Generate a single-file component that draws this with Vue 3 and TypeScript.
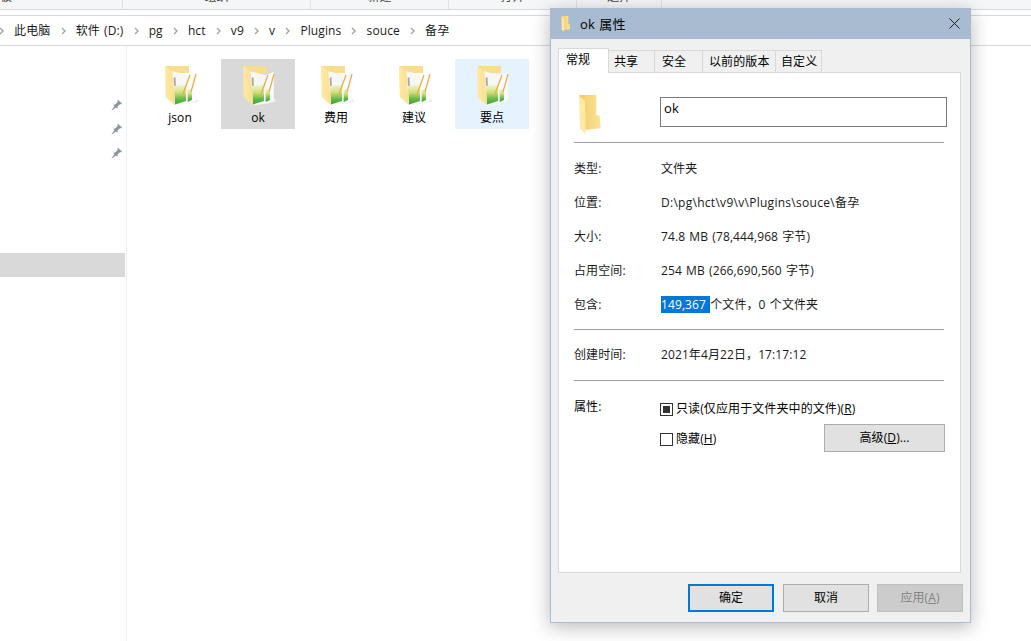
<script setup lang="ts">
interface RibbonGroup {
  label: string
  width: number
}

const ribbon: RibbonGroup[] = [
  { label: '板', width: 122 },
  { label: '组织', width: 187 },
  { label: '新建', width: 137 },
  { label: '打开', width: 127 },
  { label: '选择', width: 84 }
]

const crumbs = ['此电脑', '软件 (D:)', 'pg', 'hct', 'v9', 'v', 'Plugins', 'souce', '备孕']

const tiles = [
  { name: 'json', state: '' },
  { name: 'ok', state: 'selected' },
  { name: '费用', state: '' },
  { name: '建议', state: '' },
  { name: '要点', state: 'hover' },
  { name: '孕', state: '' }
]

const pins = [1, 2, 3]

const tabs = ['常规', '共享', '安全', '以前的版本', '自定义']

const details = [
  { label: '类型:', value: '文件夹', path: false },
  { label: '位置:', value: 'D:\\pg\\hct\\v9\\v\\Plugins\\souce\\备孕', path: true },
  { label: '大小:', value: '74.8 MB (78,444,968 字节)', path: false },
  { label: '占用空间:', value: '254 MB (266,690,560 字节)', path: false }
]
</script>

<template>
  <div class="desktop">
    <svg class="defs" width="0" height="0" aria-hidden="true">
      <defs>
        <linearGradient id="paperGreen" x1="0" y1="0" x2="0" y2="1">
          <stop offset="0" stop-color="#f7f6e4" />
          <stop offset="0.4" stop-color="#d3e07c" />
          <stop offset="0.75" stop-color="#62b648" />
          <stop offset="1" stop-color="#3da53e" />
        </linearGradient>
        <linearGradient id="folderYellow" x1="0" y1="0" x2="1" y2="0">
          <stop offset="0" stop-color="#fee9a6" />
          <stop offset="1" stop-color="#fbdf8e" />
        </linearGradient>
        <linearGradient id="folderBody" x1="0" y1="0" x2="1" y2="0">
          <stop offset="0" stop-color="#f3cd69" />
          <stop offset="1" stop-color="#fce296" />
        </linearGradient>
        <symbol id="tileFolder" viewBox="0 0 34 44">
          <path d="M23 38 L34 35.5 L30.7 32 L23 34 Z" fill="#ececec" />
          <path d="M0 0 H24 V7 H7 Z" fill="#f9dd8d" />
          <path d="M7 5 L22.7 9.3 V37.7 L10 39.3 Z" fill="#f7f7f7" />
          <path d="M8.6 12 L10.5 11 L10.8 20 L9 20 Z" fill="#a9ab9f" />
          <path d="M9 20 L21 18 V35 L10 38.4 Z" fill="url(#paperGreen)" />
          <path d="M22.7 9.3 L30.7 6 V35.3 L22.7 37.7 Z" fill="#fbfbfb" />
          <path d="M22.7 24 L27 22 V34 L22.7 36 Z" fill="url(#paperGreen)" />
          <path d="M18 28 L25 9" stroke="#e9ab3e" stroke-width="1.2" fill="none" />
          <path d="M26 26 L31 8" stroke="#e9ab3e" stroke-width="1.2" fill="none" />
          <path d="M0 0.5 L7.3 5.3 L10 39.3 L0.7 31 Z" fill="url(#folderYellow)" />
        </symbol>
        <symbol id="plainFolder" viewBox="0 0 23 40">
          <path d="M0 0 H17.3 V20 L20.7 20.7 L21.7 33.3 L6.5 35 Z" fill="url(#folderBody)" />
          <path d="M0 0.7 L6 6 L6.7 39.5 L1 33.3 Z" fill="#fee9a8" />
        </symbol>
      </defs>
    </svg>

    <div class="ribbon">
      <div v-for="group in ribbon" :key="group.label" class="ribbon-group" :style="{ width: group.width + 'px' }">
        <span>{{ group.label }}</span>
      </div>
    </div>

    <div class="address">
      <template v-for="crumb in crumbs" :key="crumb">
        <svg class="chevron" width="5" height="8" viewBox="0 0 5 8">
          <path d="M1 1 L4 4 L1 7" fill="none" stroke="#a3a3a3" stroke-width="1.4" />
        </svg>
        <span class="crumb">{{ crumb }}</span>
      </template>
    </div>

    <div class="explorer">
      <aside class="sidebar">
        <div v-for="pin in pins" :key="pin" class="side-row">
          <svg width="11" height="11" viewBox="0 0 11 11">
            <path d="M0.3 10.7 L3.4 6 L2.2 4.8 L4.8 4.2 L6.8 1.6 L6.2 0.6 L7.2 0 L11 3.6 L10.2 4.4 L9.2 3.9 L6.8 6.2 L6.4 8.8 L5 7.6 Z" fill="#8b959d" />
          </svg>
        </div>
        <div class="side-selected"></div>
      </aside>
      <main class="tiles">
        <div v-for="tile in tiles" :key="tile.name" class="tile" :class="tile.state">
          <svg class="tile-icon" width="34" height="44"><use href="#tileFolder" /></svg>
          <span class="tile-name">{{ tile.name }}</span>
        </div>
      </main>
    </div>

    <section class="dialog">
      <header class="titlebar">
        <svg class="title-icon" width="10" height="16"><use href="#plainFolder" /></svg>
        <span class="title-text">ok 属性</span>
        <svg class="close" width="11" height="11" viewBox="0 0 11 11">
          <path d="M0.5 0.5 L10.5 10.5 M10.5 0.5 L0.5 10.5" stroke="#1a1a1a" stroke-width="1" fill="none" />
        </svg>
      </header>

      <div class="dialog-body">
        <div class="tabs">
          <div v-for="(tab, i) in tabs" :key="tab" class="tab" :class="['tab-' + i, { active: i === 0 }]">{{ tab }}</div>
        </div>

        <div class="panel">
          <div class="name-row">
            <svg class="big-folder" width="23" height="40"><use href="#plainFolder" /></svg>
            <div class="name-input">ok</div>
          </div>
          <hr class="rule" />

          <div class="details">
            <div v-for="row in details" :key="row.label" class="detail">
              <span class="detail-label">{{ row.label }}</span>
              <span :class="{ 'path-value': row.path }">{{ row.value }}</span>
            </div>
            <div class="detail">
              <span class="detail-label">包含:</span>
              <span><span class="highlight">149,367 </span>个文件，0 个文件夹</span>
            </div>
          </div>
          <hr class="rule rule-second" />

          <div class="detail created">
            <span class="detail-label">创建时间:</span>
            <span>2021年4月22日，17:17:12</span>
          </div>
          <hr class="rule rule-third" />

          <div class="attrs">
            <span class="attr-label">属性:</span>
            <div class="attr-main">
              <label class="check-row">
                <span class="check mixed"></span>
                <span>只读(仅应用于文件夹中的文件)(<u>R</u>)</span>
              </label>
              <div class="check-row second">
                <span class="check"></span>
                <span>隐藏(<u>H</u>)</span>
                <button class="btn advanced" type="button">高级(<u>D</u>)...</button>
              </div>
            </div>
          </div>
        </div>

        <footer class="actions">
          <button class="btn action primary" type="button">确定</button>
          <button class="btn action" type="button">取消</button>
          <button class="btn action disabled" type="button">应用(<u>A</u>)</button>
        </footer>
      </div>
    </section>
  </div>
</template>

<style scoped>
.desktop {
  position: relative;
  width: 1031px;
  height: 641px;
  overflow: hidden;
  background: #fff;
  color: #000;
  font-family: "Open Sans", "Noto Sans CJK SC", sans-serif;
  font-size: 12px;
  line-height: 16px;
  letter-spacing: 0.1px;
  word-spacing: 1px;
}

.defs {
  position: absolute;
}

.ribbon {
  display: flex;
  height: 9px;
  background: #f5f6f7;
  border-bottom: 1px solid #dadbdc;
  overflow: hidden;
}

.ribbon-group {
  display: flex;
  justify-content: center;
  align-items: flex-start;
  border-right: 1px solid #e2e3e4;
  color: #444;
}

.ribbon-group span {
  margin-top: -11px;
}

.ribbon-group:first-child {
  justify-content: flex-start;
}

.address {
  display: flex;
  align-items: center;
  gap: 10.12px;
  height: 29px;
  margin-top: 5px;
  border-top: 1px solid #d9d9d9;
  border-bottom: 1px solid #d9d9d9;
  color: #1a1a1a;
}

.chevron:first-child {
  margin-left: -1px;
}

.explorer {
  display: flex;
  height: 595px;
}

.sidebar {
  width: 127px;
  flex: none;
  padding-top: 47px;
  border-right: 1px solid #f0f0f0;
  box-sizing: border-box;
}

.side-row {
  display: flex;
  align-items: center;
  justify-content: flex-end;
  height: 24px;
  padding-right: 4px;
}

.side-selected {
  width: 125px;
  height: 24px;
  margin-top: 88px;
  background: #d9d9d9;
}

.tiles {
  display: flex;
  gap: 4px;
  padding: 13px 0 0 16px;
  flex: 1;
  align-items: flex-start;
}

.tile {
  display: flex;
  flex-direction: column;
  align-items: center;
  flex: none;
  width: 74px;
  height: 70px;
  box-sizing: border-box;
  padding-top: 7px;
}

.tile.selected {
  background: #d9d9d9;
}

.tile.hover {
  background: #e5f3ff;
}

.tile-icon {
  margin-left: 3px;
}

.dialog {
  position: absolute;
  left: 550px;
  top: 8px;
  display: flex;
  flex-direction: column;
  width: 421px;
  height: 615px;
  box-sizing: border-box;
  border: 1px solid #a9bbd1;
  border-top: none;
  background: #f0f0f0;
  box-shadow: 0 4px 18px rgba(0, 0, 0, 0.28);
}

.titlebar {
  display: flex;
  align-items: center;
  flex: none;
  height: 31px;
  padding: 0 10px;
  background: #a9bbd1;
}

.title-icon {
  margin-right: 9px;
}

.title-text {
  flex: 1;
  font-size: 13px;
}

.dialog-body {
  display: flex;
  flex-direction: column;
  flex: 1;
  padding: 9px 7px 0;
}

.tabs {
  display: flex;
  align-items: flex-end;
  height: 24px;
  position: relative;
  z-index: 1;
}

.tab {
  display: flex;
  align-items: center;
  height: 22px;
  box-sizing: border-box;
  padding-left: 5px;
  border: 1px solid #d9d9d9;
  border-left: none;
  border-bottom: none;
  background: #f0f0f0;
}

.tab-0 { width: 51px; }
.tab-1 { width: 46px; }
.tab-2 { width: 48px; padding-left: 7px; }
.tab-3 { width: 73px; padding-left: 6px; }
.tab-4 { width: 46px; }

.tab.active {
  height: 25px;
  margin-bottom: -1px;
  padding: 0 0 2px 7px;
  border-left: 1px solid #d9d9d9;
  background: #fff;
}

.panel {
  height: 501px;
  margin-right: 2px;
  box-sizing: border-box;
  padding: 24px 15px 0;
  border: 1px solid #d9d9d9;
  background: #fff;
}

.name-row {
  display: flex;
  align-items: flex-start;
  height: 45px;
  margin-right: -2px;
}

.big-folder {
  flex: none;
  margin: -2px 58px 0 5px;
}

.name-input {
  flex: none;
  width: 287px;
  height: 30px;
  box-sizing: border-box;
  padding: 2px 3px;
  border: 1px solid #7a7a7a;
  font-size: 13px;
}

.rule {
  height: 1px;
  margin: 0;
  border: none;
  background: #a0a0a0;
  width: 370px;
}

.details {
  display: flex;
  flex-direction: column;
  gap: 18px;
  padding-top: 18px;
}

.detail {
  display: flex;
  height: 16px;
  color: #1a1a1a;
}

.detail-label {
  width: 87px;
  flex: none;
}

.path-value {
  letter-spacing: 0.28px;
}

.highlight {
  background: #0078d7;
  color: #fff;
}

.rule-second {
  margin-top: 16px;
}

.created {
  margin-top: 17px;
}

.rule-third {
  margin-top: 17px;
}

.attrs {
  display: flex;
  padding-top: 18px;
}

.attr-label {
  width: 86px;
  flex: none;
}

.attr-main {
  flex: 1;
}

.check-row {
  display: flex;
  align-items: center;
  gap: 3px;
  height: 16px;
  padding-top: 2px;
}

.check-row.second {
  margin-top: 14px;
  padding-top: 0;
}

.check {
  position: relative;
  width: 13px;
  height: 13px;
  box-sizing: border-box;
  border: 1px solid #333;
  background: #fff;
}

.check.mixed::after {
  content: "";
  position: absolute;
  inset: 2px;
  background: #333;
}

.btn {
  box-sizing: border-box;
  border: 1px solid #adadad;
  background: #e1e1e1;
  color: #000;
  font: inherit;
  letter-spacing: inherit;
  padding: 0;
}

.advanced {
  width: 121px;
  height: 28px;
  margin-left: auto;
  margin-bottom: 2px;
}

.actions {
  display: flex;
  justify-content: flex-end;
  gap: 8px;
  padding-top: 11px;
}

.action {
  width: 86px;
  height: 28px;
}

.primary {
  margin-right: 1px;
  border: 2px solid #0078d7;
}

.disabled {
  border-color: #bfbfbf;
  background: #ccc;
  color: #838383;
}
</style>
